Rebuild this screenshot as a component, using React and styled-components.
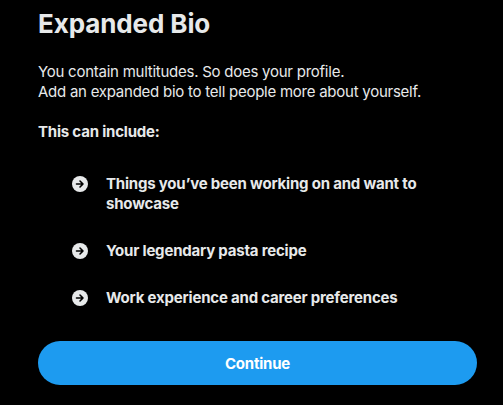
import React from "react";
import styled, { createGlobalStyle } from "styled-components";

const GlobalStyle = createGlobalStyle`
  html, body {
    margin: 0;
    padding: 0;
    background: #000;
  }
  body {
    font-family: Inter, "Noto Sans", sans-serif;
    color: #e7e9ea;
  }
`;

const Sheet = styled.div`
  width: 503px;
  height: 405px;
  box-sizing: border-box;
  padding: 8px 26px 0 38px;
  background: #000;
  display: flex;
  flex-direction: column;
`;

const Title = styled.h1`
  margin: 0;
  font-size: 26px;
  line-height: 32px;
  font-weight: 700;
  letter-spacing: -0.1px;
  color: #e7e9ea;
`;

const Intro = styled.p`
  margin: 22px 0 0;
  font-size: 15px;
  line-height: 20px;
  font-weight: 400;
  letter-spacing: -0.25px;
`;

const Heading = styled.p`
  margin: 20px 0 0;
  font-size: 15px;
  line-height: 20px;
  font-weight: 700;
  letter-spacing: -0.2px;
`;

const List = styled.ul`
  list-style: none;
  margin: 32px 0 0;
  padding: 0 0 0 34px;
  display: flex;
  flex-direction: column;
  gap: 27px;
`;

const Item = styled.li`
  display: flex;
  align-items: flex-start;
  gap: 18px;
  font-size: 15px;
  line-height: 20px;
  font-weight: 700;
  letter-spacing: -0.2px;
`;

const Bullet = styled.svg`
  flex: 0 0 16px;
  width: 16px;
  height: 16px;
  margin-top: 2px;
`;

const Text = styled.span`
  max-width: 330px;
`;

const Button = styled.button`
  margin: 33px 0 0;
  width: 439px;
  height: 44px;
  border: none;
  border-radius: 22px;
  background: #1d9bf0;
  color: #fff;
  font-family: Inter, "Noto Sans", sans-serif;
  font-size: 15px;
  font-weight: 700;
  letter-spacing: -0.2px;
  cursor: pointer;
`;

function ArrowBullet() {
  return (
    <Bullet viewBox="0 0 16 16">
      <circle cx="8" cy="8" r="8" fill="#e7e9ea" />
      <path
        d="M4.5 8h6.5M8 5l3 3-3 3"
        fill="none"
        stroke="#000"
        strokeWidth="1.6"
        strokeLinecap="round"
        strokeLinejoin="round"
      />
    </Bullet>
  );
}

const items = [
  "Things you’ve been working on and want to showcase",
  "Your legendary pasta recipe",
  "Work experience and career preferences",
];

export default function App() {
  return (
    <>
      <GlobalStyle />
      <Sheet>
        <Title>Expanded Bio</Title>
        <Intro>
          You contain multitudes. So does your profile.
          <br />
          Add an expanded bio to tell people more about yourself.
        </Intro>
        <Heading>This can include:</Heading>
        <List>
          {items.map((t) => (
            <Item key={t}>
              <ArrowBullet />
              <Text>{t}</Text>
            </Item>
          ))}
        </List>
        <Button>Continue</Button>
      </Sheet>
    </>
  );
}
